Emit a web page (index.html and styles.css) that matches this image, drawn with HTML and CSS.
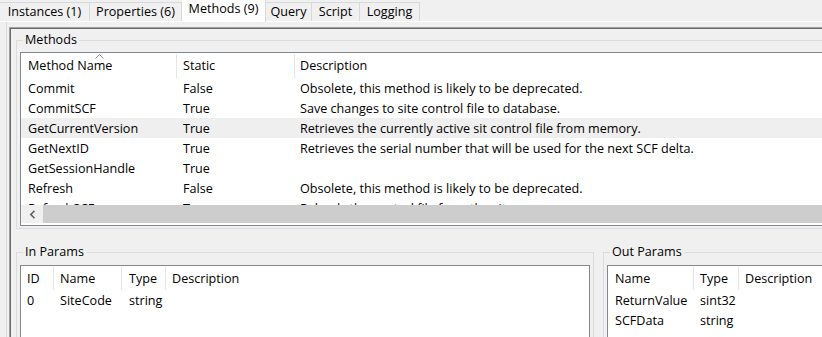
FILE: index.html
```html
<!DOCTYPE html>
<html>
<head>
<meta charset="utf-8">
<link rel="stylesheet" href="styles.css">
</head>
<body>
<div class="tabs">
  <div class="tab t1">Instances (1)</div>
  <div class="tab t2">Properties (6)</div>
  <div class="tab t3 sel">Methods (9)</div>
  <div class="tab t4">Query</div>
  <div class="tab t5">Script</div>
  <div class="tab t6">Logging</div>
</div>
<div class="page">
  <div class="frame">
    <div class="sunken">
      <fieldset class="group methods">
        <legend>Methods</legend>
        <div class="lv lv-methods">
          <div class="lv-head">
            <div class="hc">Method Name<svg class="sort" width="9" height="5" viewBox="0 0 9 5"><polyline points="0.5,4.5 4.5,0.5 8.5,4.5" fill="none" stroke="#8a8a8a" stroke-width="1"/></svg></div>
            <div class="hc">Static</div>
            <div class="hc last">Description</div>
          </div>
          <div class="lv-body">
            <div class="row"><span>Commit</span><span>False</span><span>Obsolete, this method is likely to be deprecated.</span></div>
            <div class="row"><span>CommitSCF</span><span>True</span><span>Save changes to site control file to database.</span></div>
            <div class="row hot"><span>GetCurrentVersion</span><span>True</span><span>Retrieves the currently active sit control file from memory.</span></div>
            <div class="row"><span>GetNextID</span><span>True</span><span>Retrieves the serial number that will be used for the next SCF delta.</span></div>
            <div class="row"><span>GetSessionHandle</span><span>True</span><span></span></div>
            <div class="row"><span>Refresh</span><span>False</span><span>Obsolete, this method is likely to be deprecated.</span></div>
            <div class="row"><span>RefreshSCF</span><span>True</span><span>Reloads the control file from the site server.</span></div>
          </div>
          <div class="hscroll">
            <div class="sb-btn"><svg width="7" height="9" viewBox="0 0 7 9"><polyline points="5.5,0.8 1.8,4.5 5.5,8.2" fill="none" stroke="#606060" stroke-width="1.6"/></svg></div>
            <div class="sb-thumb"></div>
          </div>
        </div>
      </fieldset>
      <div class="params">
        <fieldset class="group inparams">
          <legend>In Params</legend>
          <div class="lv lv-in">
            <div class="lv-head">
              <div class="hc">ID</div>
              <div class="hc">Name</div>
              <div class="hc">Type</div>
              <div class="hc last">Description</div>
            </div>
            <div class="lv-body">
              <div class="row"><span>0</span><span>SiteCode</span><span>string</span><span></span></div>
            </div>
          </div>
        </fieldset>
        <fieldset class="group outparams">
          <legend>Out Params</legend>
          <div class="lv lv-out">
            <div class="lv-head">
              <div class="hc">Name</div>
              <div class="hc">Type</div>
              <div class="hc last">Description</div>
            </div>
            <div class="lv-body">
              <div class="row"><span>ReturnValue</span><span>sint32</span><span></span></div>
              <div class="row"><span>SCFData</span><span>string</span><span></span></div>
            </div>
          </div>
        </fieldset>
      </div>
    </div>
  </div>
</div>
</body>
</html>
```
FILE: styles.css
```css
* { box-sizing: border-box; }
html, body {
  margin: 0;
  padding: 0;
  width: 822px;
  height: 337px;
  overflow: hidden;
  background: #f0f0f0;
  font-family: "Open Sans", "Noto Sans", sans-serif;
  font-size: 12.6px;
  color: #000;
}

/* tabs */
.tabs {
  display: flex;
  align-items: flex-end;
  height: 21px;
}
.tab {
  height: 19px;
  line-height: 18px;
  text-align: center;
  border-top: 1px solid #d9d9d9;
  border-right: 1px solid #d9d9d9;
  background: #f0f0f0;
  white-space: nowrap;
}
.tab.sel {
  height: 22px;
  line-height: 18px;
  padding-bottom: 2px;
  background: #fff;
  margin-bottom: -1px;
  position: relative;
  z-index: 1;
  border-top: none;
}
.t1 { width: 90px; }
.t2 { width: 92px; }
.t3 { width: 84px; }
.t4 { width: 46px; }
.t5 { width: 48px; }
.t6 { width: 60px; }

/* page */
.page {
  border-top: 1px solid #fff;
  height: 316px;
  overflow: hidden;
}
.frame {
  margin-left: 6px;
  border-left: 1px solid #dadada;
  padding: 5px 0 0 2px;
  height: 100%;
}
.sunken {
  width: 840px;
  height: 310px;
  overflow: hidden;
  border-top: 1px solid #a0a0a0;
  border-left: 1px solid #a0a0a0;
  box-shadow: inset 1px 1px 0 #696969;
  padding: 1px 0 0 1px;
}

/* group boxes */
.group {
  border: 1px solid #dcdcdc;
  margin: 0;
  padding: 5px 3px 2px 3px;
  min-width: 0;
}
.group legend {
  line-height: 14px;
  padding: 0 2px;
  margin-left: 3px;
}
.methods {
  margin: 4px 0 0 5px;
}
.params {
  display: flex;
  gap: 9px;
  margin: 16px 0 0 5px;
}
.inparams {
  width: 578px;
  flex: none;
  padding-top: 6px;
}
.outparams {
  flex: 1;
  padding-top: 6px;
}

/* list views */
.lv {
  background: #fff;
  border: 1px solid #828790;
  display: flex;
  flex-direction: column;
}
.lv-methods {
  height: 174px;
  padding-bottom: 2px;
}
.lv-in, .lv-out {
  height: 90px;
}
.lv-head {
  display: grid;
  height: 25px;
  padding-top: 1px;
}
.lv-in .lv-head, .lv-out .lv-head {
  height: 24px;
}
.hc {
  position: relative;
  border-right: 1px solid #e5e5e5;
  line-height: 24px;
  padding-left: 6px;
  white-space: nowrap;
}
.lv-in .hc, .lv-out .hc { line-height: 23px; }
.hc.last { border-right: none; }
.sort {
  position: absolute;
  left: 74px;
  top: 0;
}
.lv-body {
  flex: 1;
  overflow: hidden;
}
.row {
  display: grid;
  height: 20px;
  line-height: 21px;
  white-space: nowrap;
}
.row span {
  padding-left: 6px;
  overflow: hidden;
}
.row.hot { background: #efefef; }

.lv-methods .lv-head, .lv-methods .row { grid-template-columns: 156px 118px 1fr; }
.lv-methods .hc:first-child, .lv-methods .row span:first-child { padding-left: 7px; }
.lv-methods .hc.last, .lv-methods .row span:last-child { padding-left: 5px; }
.lv-in .lv-head, .lv-in .row { grid-template-columns: 33px 68px 44px 1fr; }
.lv-in .hc:nth-child(3), .lv-in .row span:nth-child(3) { padding-left: 7px; }
.lv-out .lv-head, .lv-out .row { grid-template-columns: 86px 45px 1fr; }
.lv-out .hc:first-child, .lv-out .row span:first-child { padding-left: 7px; }

/* horizontal scrollbar */
.hscroll {
  display: flex;
  height: 18px;
  flex: none;
}
.sb-btn {
  width: 22px;
  background: #f0f0f0;
  display: flex;
  align-items: center;
  justify-content: center;
}
.sb-thumb {
  flex: 1;
  background: #cdcdcd;
}
```
